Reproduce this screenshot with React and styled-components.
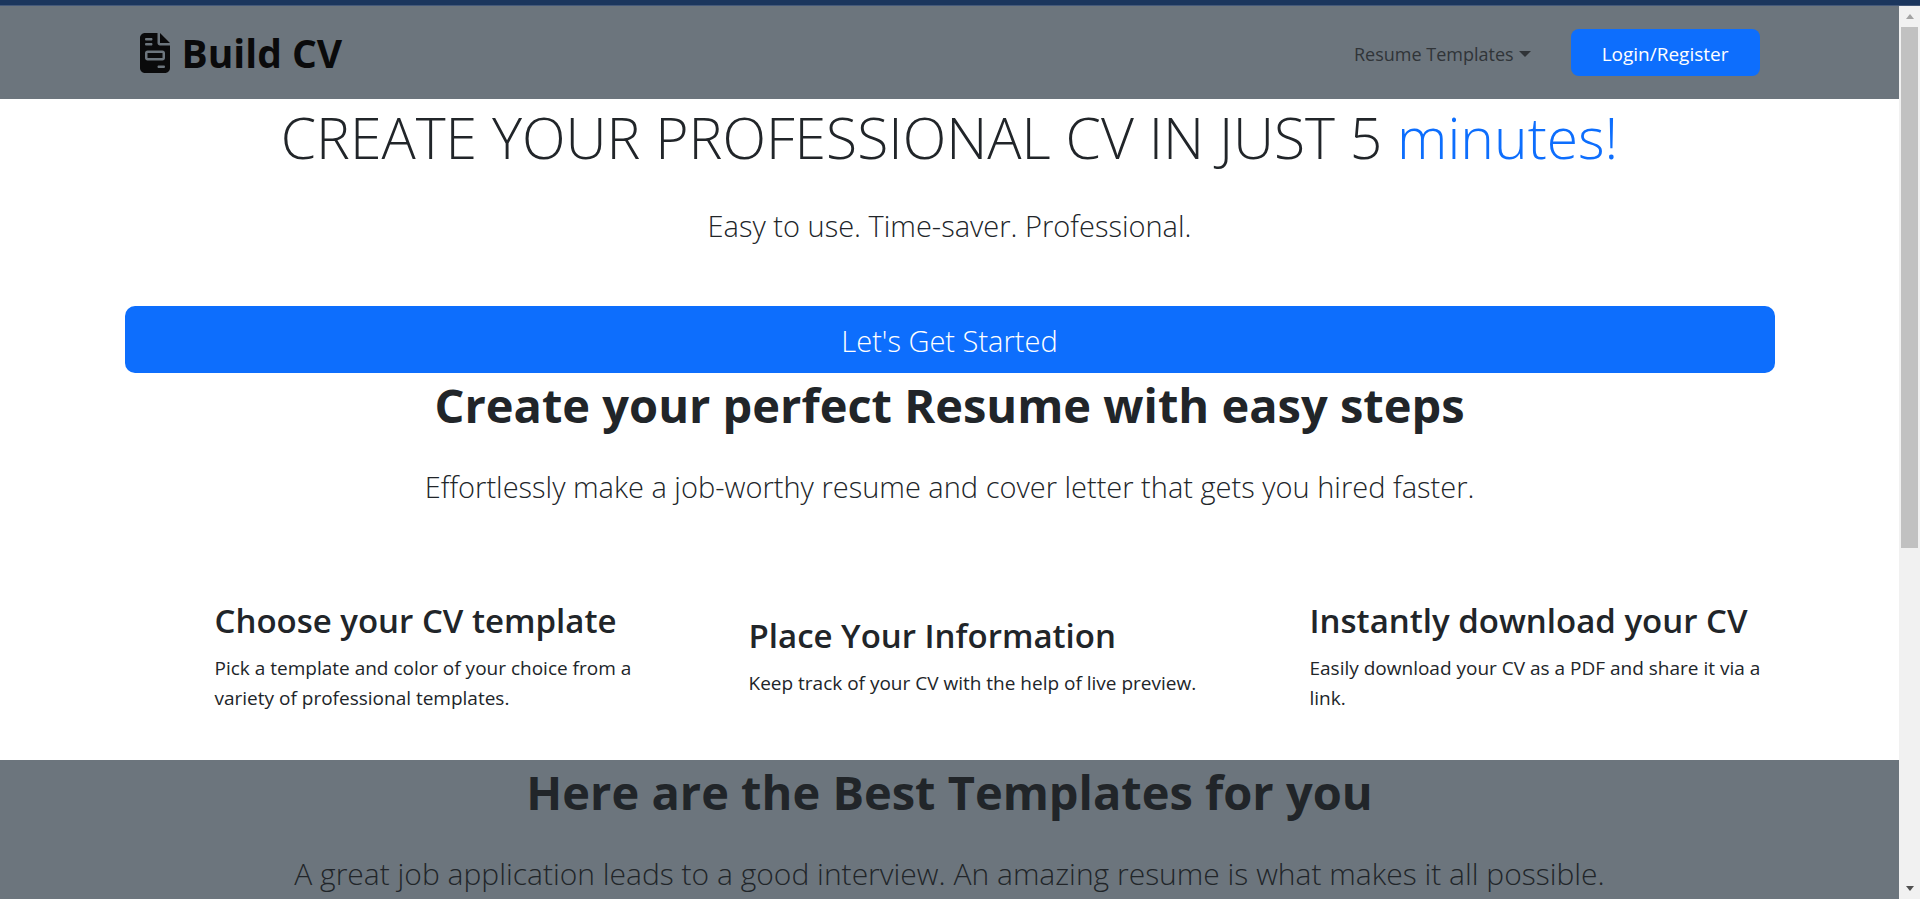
import React from "react";
import styled, { createGlobalStyle } from "styled-components";
import { FaFileInvoice } from "react-icons/fa6";

const GlobalStyle = createGlobalStyle`
  *, *::before, *::after { box-sizing: border-box; }
  body {
    margin: 0;
    color: #212529;
    background: #fff;
    font-family: "Open Sans", "Noto Sans", sans-serif;
    font-size: 19px;
    line-height: 30px;
  }
  h1, h2, h3, p { margin: 0; }
`;

const Page = styled.div`
  display: flex;
  flex-direction: column;
  height: 100vh;
  overflow: hidden;
`;

const TopStrip = styled.div`
  flex: none;
  height: 6px;
  background: #1b365d;
  border-bottom: 1px solid #44597a;
`;

const Viewport = styled.div`
  flex: 1;
  min-height: 0;
  display: flex;
`;

const Content = styled.div`
  flex: 1;
  min-width: 0;
  overflow: hidden;
`;

const Container = styled.div`
  width: 100%;
  max-width: 1650px;
  margin: 0 auto;
`;

const Navbar = styled.nav`
  padding: 16px 0;
  background: #6c757d;
`;

const NavInner = styled(Container)`
  display: flex;
  align-items: center;
  justify-content: space-between;
  padding: 0 15px;
`;

const Brand = styled.a`
  display: flex;
  align-items: center;
  gap: 12px;
  color: #0a0a0b;
  font-size: 39px;
  font-weight: 700;
  line-height: 61px;
  text-decoration: none;

  svg { display: block; width: 30px; height: 40px; }
`;

const NavActions = styled.div`
  display: flex;
  align-items: center;
  gap: 40px;
`;

const DropdownToggle = styled.button`
  display: flex;
  align-items: center;
  gap: 5px;
  padding: 2px 0 0;
  border: 0;
  background: none;
  color: #303438;
  font: inherit;
  font-size: 18px;

  &::after {
    content: "";
    border: 6px solid transparent;
    border-top-color: currentColor;
    border-bottom: 0;
  }
`;

const Button = styled.button`
  border: 0;
  background: #0d6efd;
  color: #fff;
  font-family: inherit;
`;

const LoginButton = styled(Button)`
  padding: 10px 31px 7px;
  border-radius: 8px;
  font-size: 19px;
  line-height: 30px;
`;

const StartButton = styled(Button)`
  display: block;
  width: 100%;
  margin-top: 58px;
  padding: 12px 20px 10px;
  border-radius: 10px;
  font-size: 29px;
  font-weight: 300;
  line-height: 45px;
`;

const HeroTitle = styled.h1`
  padding-top: 1px;
  font-size: 57px;
  font-weight: 300;
  line-height: 75px;
  text-align: center;

  span { color: #0d6efd; }
`;

const SectionTitle = styled.h2`
  padding-top: 2px;
  font-size: 47px;
  font-weight: 700;
  line-height: 60px;
  text-align: center;
`;

const Lead = styled.p`
  margin-top: 28px;
  font-size: 29px;
  font-weight: 300;
  line-height: 45px;
  text-align: center;
`;

const SectionLead = styled(Lead)`
  margin-top: 29px;
  font-size: ${({ $wide }) => ($wide ? 30 : 29)}px;
`;

const Features = styled.div`
  display: grid;
  grid-template-columns: 534fr 561fr 465fr;
  align-items: center;
  padding: 91px 0 47px 90px;
`;

const Feature = styled.article`
  padding-right: ${({ $inset }) => $inset || 0}px;

  h3 {
    margin-bottom: 11px;
    font-size: 33px;
    font-weight: 600;
    line-height: 42px;
  }
`;

const TemplatesSection = styled.section`
  padding-bottom: 60px;
  background: #6c757d;
`;

const Scrollbar = styled.div`
  flex: none;
  display: flex;
  flex-direction: column;
  width: 21px;
  padding: 0 2px;
  background: #f1f1f1;
`;

const ScrollArrow = styled.span`
  flex: none;
  display: grid;
  place-items: center;
  height: 21px;

  &::before {
    content: "";
    border-style: solid;
    border-width: ${({ $up }) => ($up ? "0 4px 5px" : "5px 4px 0")};
    border-color: ${({ $up }) =>
      $up ? "transparent transparent #a3a3a3" : "#505050 transparent transparent"};
  }
`;

const ScrollTrack = styled.div`
  flex: 1;
`;

const ScrollThumb = styled.div`
  height: 61.2%;
  background: #c1c1c1;
`;

const features = [
  {
    title: "Choose your CV template",
    text: "Pick a template and color of your choice from a variety of professional templates.",
    inset: 90,
  },
  {
    title: "Place Your Information",
    text: "Keep track of your CV with the help of live preview.",
    inset: 60,
  },
  {
    title: "Instantly download your CV",
    text: "Easily download your CV as a PDF and share it via a link.",
    inset: 0,
  },
];

export default function App() {
  return (
    <Page>
      <GlobalStyle />
      <TopStrip />
      <Viewport>
        <Content>
          <Navbar>
            <NavInner>
              <Brand href="#">
                <FaFileInvoice />
                Build CV
              </Brand>
              <NavActions>
                <DropdownToggle type="button">Resume Templates</DropdownToggle>
                <LoginButton type="button">Login/Register</LoginButton>
              </NavActions>
            </NavInner>
          </Navbar>
          <main>
            <Container>
              <HeroTitle>
                CREATE YOUR PROFESSIONAL CV IN JUST 5 <span>minutes!</span>
              </HeroTitle>
              <Lead>Easy to use. Time-saver. Professional.</Lead>
              <StartButton type="button">Let's Get Started</StartButton>
              <SectionTitle>Create your perfect Resume with easy steps</SectionTitle>
              <SectionLead>
                Effortlessly make a job-worthy resume and cover letter that gets you hired faster.
              </SectionLead>
              <Features>
                {features.map(({ title, text, inset }) => (
                  <Feature key={title} $inset={inset}>
                    <h3>{title}</h3>
                    <p>{text}</p>
                  </Feature>
                ))}
              </Features>
            </Container>
            <TemplatesSection>
              <Container>
                <SectionTitle>Here are the Best Templates for you</SectionTitle>
                <SectionLead $wide>
                  A great job application leads to a good interview. An amazing resume is what makes
                  it all possible.
                </SectionLead>
              </Container>
            </TemplatesSection>
          </main>
        </Content>
        <Scrollbar aria-hidden="true">
          <ScrollArrow $up />
          <ScrollTrack>
            <ScrollThumb />
          </ScrollTrack>
          <ScrollArrow />
        </Scrollbar>
      </Viewport>
    </Page>
  );
}
